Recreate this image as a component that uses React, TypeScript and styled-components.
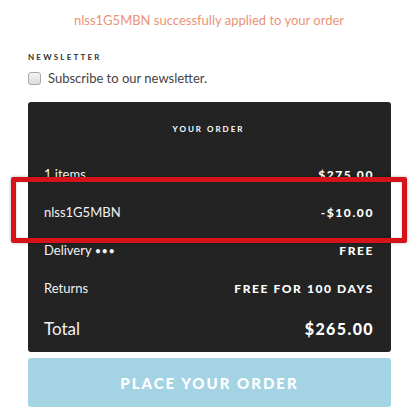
import React from "react";
import styled, { createGlobalStyle } from "styled-components";

const Global = createGlobalStyle`
  html, body { margin: 0; padding: 0; background: #fff; }
  body { font-family: Lato, "Open Sans", "Liberation Sans", sans-serif; }
`;

const Page = styled.div`
  position: relative;
  width: 418px;
  height: 413px;
  overflow: hidden;
`;

const Notice = styled.div`
  padding-top: 11px;
  height: 18px;
  line-height: 18px;
  text-align: center;
  font-size: 13px;
  color: #ea9478;
`;

const Content = styled.div`
  padding: 0 27px 0 28px;
  display: flex;
  flex-direction: column;
`;

const SectionLabel = styled.div`
  margin-top: 23px;
  height: 10px;
  line-height: 10px;
  font-size: 8px;
  font-weight: 700;
  letter-spacing: 2.2px;
  color: #333;
`;

const CheckRow = styled.label`
  margin-top: 7px;
  display: flex;
  align-items: center;
  gap: 7px;
  height: 18px;
  font-size: 13px;
  color: #444;
`;

const Box = styled.span`
  width: 11px;
  height: 11px;
  border: 1px solid #a8a8a8;
  border-radius: 3px;
  background: linear-gradient(#f4f4f4, #dcdcdc);
`;

const Panel = styled.div`
  margin-top: 15px;
  background: #232323;
  border-radius: 3px;
  padding: 22px 18px 3px 16px;
  display: flex;
  flex-direction: column;
  color: #fff;
`;

const PanelTitle = styled.div`
  text-align: center;
  height: 10px;
  line-height: 10px;
  font-size: 8px;
  font-weight: 700;
  letter-spacing: 2px;
  margin-bottom: 21px;
`;

const Row = styled.div<{ $big?: boolean }>`
  display: flex;
  justify-content: space-between;
  align-items: center;
  height: ${(p) => (p.$big ? 42 : 38)}px;
`;

const Label = styled.span<{ $big?: boolean }>`
  font-size: ${(p) => (p.$big ? 17 : 13)}px;
  color: #f2f2f2;
`;

const Value = styled.span<{ $big?: boolean }>`
  font-size: ${(p) => (p.$big ? 16 : 12)}px;
  font-weight: 900;
  letter-spacing: ${(p) => (p.$big ? 1.4 : 1.6)}px;
  margin-right: -1px;
`;

const Dots = styled.span`
  font-size: 11px;
  letter-spacing: 0.5px;
  margin-left: 3px;
`;

const OrderButton = styled.button`
  margin-top: 6px;
  height: 49px;
  border: none;
  border-radius: 3px;
  background: #a4d4e4;
  color: #fff;
  font-family: Lato, "Liberation Sans", sans-serif;
  font-size: 15px;
  font-weight: 900;
  letter-spacing: 2px;
  cursor: pointer;
`;

const Highlight = styled.div`
  position: absolute;
  left: 11px;
  top: 177px;
  width: 386px;
  height: 56px;
  border: 5px solid #d6121a;
  border-radius: 2px;
  box-shadow: 0 0 3px rgba(0, 0, 0, 0.35), inset 0 0 2px rgba(0, 0, 0, 0.3);
  pointer-events: none;
`;

const rows = [
  { label: "1 items", value: "$275.00" },
  { label: "nlss1G5MBN", value: "-$10.00" },
  { label: "Delivery", value: "FREE", dots: true },
  { label: "Returns", value: "FREE FOR 100 DAYS" },
];

export default function App() {
  return (
    <Page>
      <Global />
      <Notice>nlss1G5MBN successfully applied to your order</Notice>
      <Content>
        <SectionLabel>NEWSLETTER</SectionLabel>
        <CheckRow>
          <Box />
          Subscribe to our newsletter.
        </CheckRow>
        <Panel>
          <PanelTitle>YOUR ORDER</PanelTitle>
          {rows.map((r) => (
            <Row key={r.label}>
              <Label>
                {r.label}
                {r.dots && <Dots>•••</Dots>}
              </Label>
              <Value>{r.value}</Value>
            </Row>
          ))}
          <Row $big>
            <Label $big>Total</Label>
            <Value $big>$265.00</Value>
          </Row>
        </Panel>
        <OrderButton>PLACE YOUR ORDER</OrderButton>
      </Content>
      <Highlight />
    </Page>
  );
}
